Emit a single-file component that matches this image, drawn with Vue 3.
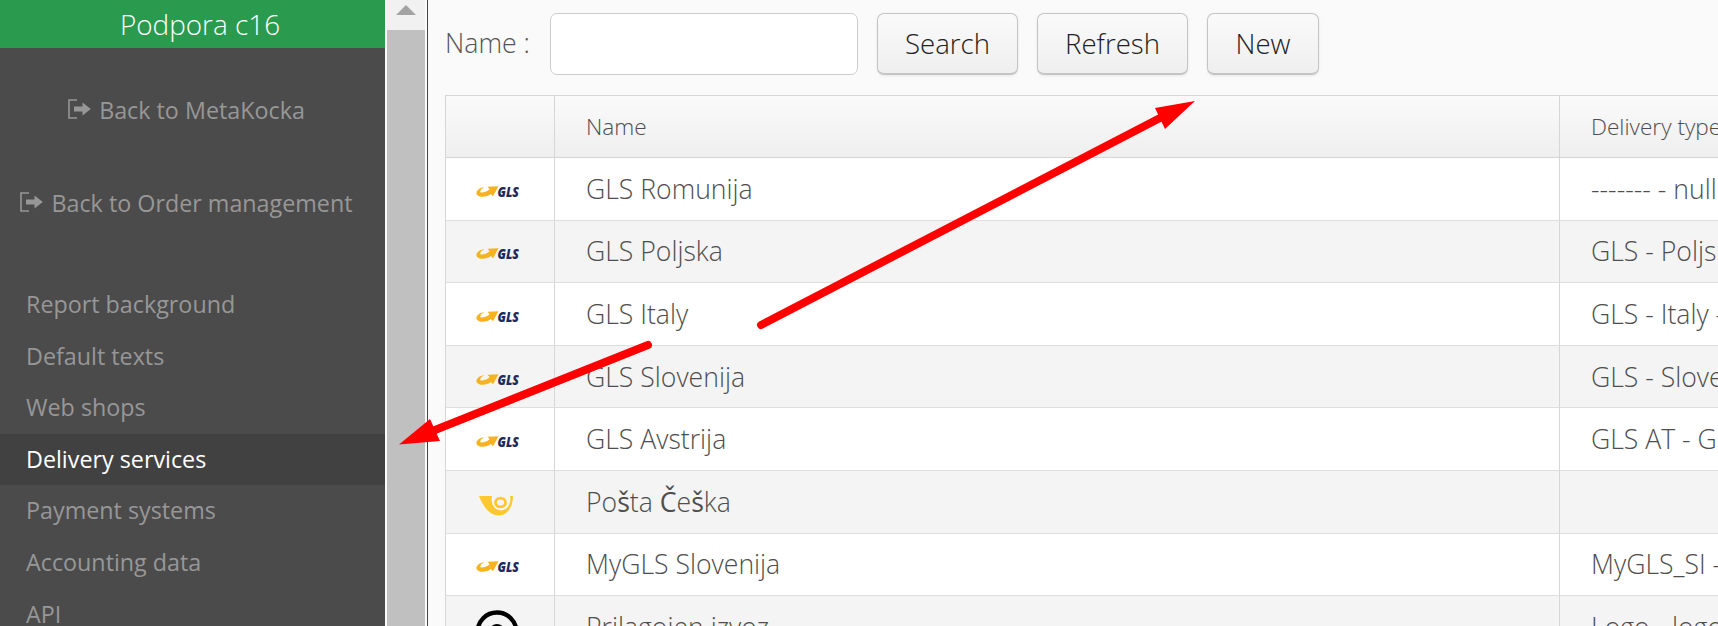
<script setup>
const menu = [
  { label: 'Report background' },
  { label: 'Default texts' },
  { label: 'Web shops' },
  { label: 'Delivery services', active: true },
  { label: 'Payment systems' },
  { label: 'Accounting data' },
  { label: 'API' }
]
const rows = [
  { logo: 'gls', name: 'GLS Romunija', type: '------- - null' },
  { logo: 'gls', name: 'GLS Poljska', type: 'GLS - Poljska' },
  { logo: 'gls', name: 'GLS Italy', type: 'GLS - Italy - null' },
  { logo: 'gls', name: 'GLS Slovenija', type: 'GLS - Slovenija' },
  { logo: 'gls', name: 'GLS Avstrija', type: 'GLS AT - GLS' },
  { logo: 'posta', name: 'Češka', type: '' },
  { logo: 'gls', name: 'MyGLS Slovenija', type: 'MyGLS_SI - My' },
  { logo: 'circle', name: 'Prilagojen izvoz', type: 'Logo - logo' }
]
</script>

<template>
  <div class="page">
    <aside class="sidebar">
      <div class="brand">Podpora c16</div>
      <a class="back first">
        <svg class="exit" width="23" height="20" viewBox="0 0 23 20">
          <path d="M9 1H1V19H9" fill="none" stroke="currentColor" stroke-width="1.6" />
          <path d="M6 7.5H14.5V3.5L22.8 10L14.5 16.5V12.5H6Z" fill="currentColor" />
        </svg>
        <span>Back to MetaKocka</span>
      </a>
      <a class="back second">
        <svg class="exit" width="23" height="20" viewBox="0 0 23 20">
          <path d="M9 1H1V19H9" fill="none" stroke="currentColor" stroke-width="1.6" />
          <path d="M6 7.5H14.5V3.5L22.8 10L14.5 16.5V12.5H6Z" fill="currentColor" />
        </svg>
        <span>Back to Order management</span>
      </a>
      <nav class="menu">
        <a v-for="item in menu" :key="item.label" class="menu-item" :class="{ active: item.active }">{{ item.label }}</a>
      </nav>
    </aside>

    <div class="scrollbar">
      <div class="scroll-up"><span class="triangle"></span></div>
      <div class="scroll-thumb"></div>
    </div>

    <main class="content">
      <div class="toolbar">
        <label class="field-label">Name :</label>
        <input class="field" type="text" />
        <button class="btn search">Search</button>
        <button class="btn refresh">Refresh</button>
        <button class="btn new">New</button>
      </div>

      <div class="table">
        <div class="row head">
          <div class="cell logo-cell"></div>
          <div class="cell">Name</div>
          <div class="cell">Delivery type</div>
        </div>
        <div v-for="(row, i) in rows" :key="i" class="row" :class="{ odd: i % 2 === 1 }">
          <div class="cell logo-cell">
            <svg v-if="row.logo === 'gls'" class="gls" width="43" height="12" viewBox="0 0 43 12">
              <path d="M8 1C3 2 -0.8 5.5 0.8 8.4C3 11.6 11 11.4 14.8 8L17 10.2L22.5 0.3L11.6 0.8L13.6 3.2C10.5 5.8 6 7 4.6 6.2C3.6 5.4 5 2.8 8.4 1Z" fill="#f6b221" />
              <text x="21.5" y="10.8" textLength="21.5" lengthAdjust="spacingAndGlyphs" class="gls-text">GLS</text>
            </svg>
            <svg v-else-if="row.logo === 'posta'" class="horn" width="34" height="20" viewBox="0 0 34 20">
              <path d="M0 0H34C34 11 28 19.5 20 19.5C10 19.5 4 10 0 0Z" fill="#fdc82f" />
              <ellipse cx="22" cy="3.5" rx="9.4" ry="11" fill="#f4f4f4" />
              <ellipse cx="21.5" cy="6.5" rx="5" ry="4.4" fill="none" stroke="#fdc82f" stroke-width="2.8" />
            </svg>
            <svg v-else class="ring" width="44" height="44" viewBox="0 0 44 44">
              <circle cx="22" cy="22" r="19.5" fill="none" stroke="#000" stroke-width="4.4" />
              <circle cx="22" cy="22" r="6" fill="none" stroke="#000" stroke-width="4" />
            </svg>
          </div>
          <div class="cell">
            <span v-if="row.logo === 'posta'">Po<b class="fallback">š</b>ta <b class="fallback">Č</b>e<b class="fallback">š</b>ka</span>
            <span v-else>{{ row.name }}</span>
          </div>
          <div class="cell">{{ row.type }}</div>
        </div>
      </div>
    </main>

    <svg class="arrows" width="1718" height="626" viewBox="0 0 1718 626">
      <g fill="#ff0000">
        <line x1="761" y1="325" x2="1160" y2="118" stroke="#ff0000" stroke-width="8" stroke-linecap="round" />
        <polygon points="1195,101 1155,108 1165,129" />
        <line x1="648" y1="345" x2="435" y2="430" stroke="#ff0000" stroke-width="8" stroke-linecap="round" />
        <polygon points="399,444.5 430,419 440,441" />
      </g>
    </svg>
  </div>
</template>

<style scoped>
.page {
  position: relative;
  display: flex;
  width: 1718px;
  height: 626px;
  overflow: hidden;
  background: #fff;
  font-family: "Open Sans", "Liberation Sans", sans-serif;
}
.sidebar {
  flex: 0 0 385px;
  background: #4b4b4b;
  color: #989898;
  display: flex;
  flex-direction: column;
}
.brand {
  height: 60px;
  padding-left: 15px;
  background: #2a9a4f;
  color: #fff;
  font-size: 27.9px;
  font-weight: 300;
  line-height: 48px;
  text-align: center;
}
.back {
  display: flex;
  justify-content: center;
  align-items: center;
  gap: 8px;
  padding-right: 12px;
  font-size: 23.3px;
  line-height: 32px;
  color: #979797;
}
.back.first { margin-top: 46px; }
.back.second { margin-top: 61px; }
.exit { flex: none; margin-top: -3px; }
.menu {
  margin-top: 60px;
  display: flex;
  flex-direction: column;
}
.menu-item {
  height: 51.6px;
  line-height: 51.6px;
  padding-left: 26px;
  font-size: 23.3px;
  color: #979797;
}
.menu-item.active {
  background: #414141;
  color: #fff;
}
.scrollbar {
  flex: 0 0 43px;
  box-sizing: border-box;
  padding: 0 2px;
  background: #fbfbfb;
  border-right: 1px solid #444;
  display: flex;
  flex-direction: column;
}
.scroll-up {
  height: 30px;
  background: #f1f1f1;
  display: flex;
  justify-content: center;
  padding-top: 5px;
  box-sizing: border-box;
  width: 38px;
}
.triangle {
  width: 0;
  height: 0;
  border-left: 10px solid transparent;
  border-right: 10px solid transparent;
  border-bottom: 10px solid #a3a3a3;
}
.scroll-thumb {
  flex: 1;
  width: 38px;
  background: #c0c0c0;
}
.content {
  flex: 1;
  min-width: 0;
  background: #fafafa;
  padding: 13px 0 0 17px;
  overflow: hidden;
}
.toolbar {
  display: flex;
  align-items: center;
  height: 61px;
  margin-bottom: 21px;
}
.field-label {
  width: 105px;
  flex: none;
  font-size: 26.7px;
  font-weight: 300;
  color: #555;
  margin-top: -2px;
}
.field {
  flex: none;
  box-sizing: border-box;
  width: 308px;
  height: 62px;
  border: 1px solid #ccc;
  border-radius: 7px;
  background: #fff;
}
.btn {
  flex: none;
  box-sizing: border-box;
  height: 62px;
  border: 1px solid #c4c4c4;
  border-bottom-width: 2px;
  border-radius: 7px;
  background: linear-gradient(#fafafa, #efefef);
  box-shadow: 0 1px 3px rgba(0, 0, 0, 0.08);
  font-family: inherit;
  font-size: 27.6px;
  font-weight: 300;
  color: #222;
  padding: 0;
}
.search { width: 141px; margin-left: 19px; }
.refresh { width: 151px; margin-left: 19px; }
.new { width: 112px; margin-left: 19px; }
.table {
  width: 1400px;
  border-left: 1px solid #d6d6d6;
  border-top: 1px solid #d6d6d6;
  font-weight: 300;
  color: #4e4e4e;
}
.row {
  display: grid;
  grid-template-columns: 109px 1005px 1fr;
  height: 62.6px;
  box-sizing: border-box;
  border-bottom: 1px solid #dedede;
  background: #fff;
  font-size: 26.6px;
}
.row.odd { background: #f4f4f4; }
.row.head {
  height: 62px;
  background: linear-gradient(#fafafa, #efefef);
  font-size: 22.6px;
  border-bottom: 1px solid #d6d6d6;
}
.cell {
  box-sizing: border-box;
  border-right: 1px solid #d6d6d6;
  padding-left: 31px;
  display: flex;
  align-items: center;
  white-space: nowrap;
  overflow: hidden;
}
.logo-cell {
  padding-left: 0;
  justify-content: center;
}
.fallback { font-weight: 500; }
.gls { margin: 6px 6px 0 0; }
.horn { margin: 8px 8px 0 0; }
.gls-text {
  font-family: "Open Sans", sans-serif;
  font-size: 14.5px;
  font-weight: 800;
  font-style: italic;
  fill: #1d2a5c;
}
.ring { align-self: flex-start; margin: 14px 6px 0 0; }
.arrows {
  position: absolute;
  left: 0;
  top: 0;
  pointer-events: none;
}
</style>
